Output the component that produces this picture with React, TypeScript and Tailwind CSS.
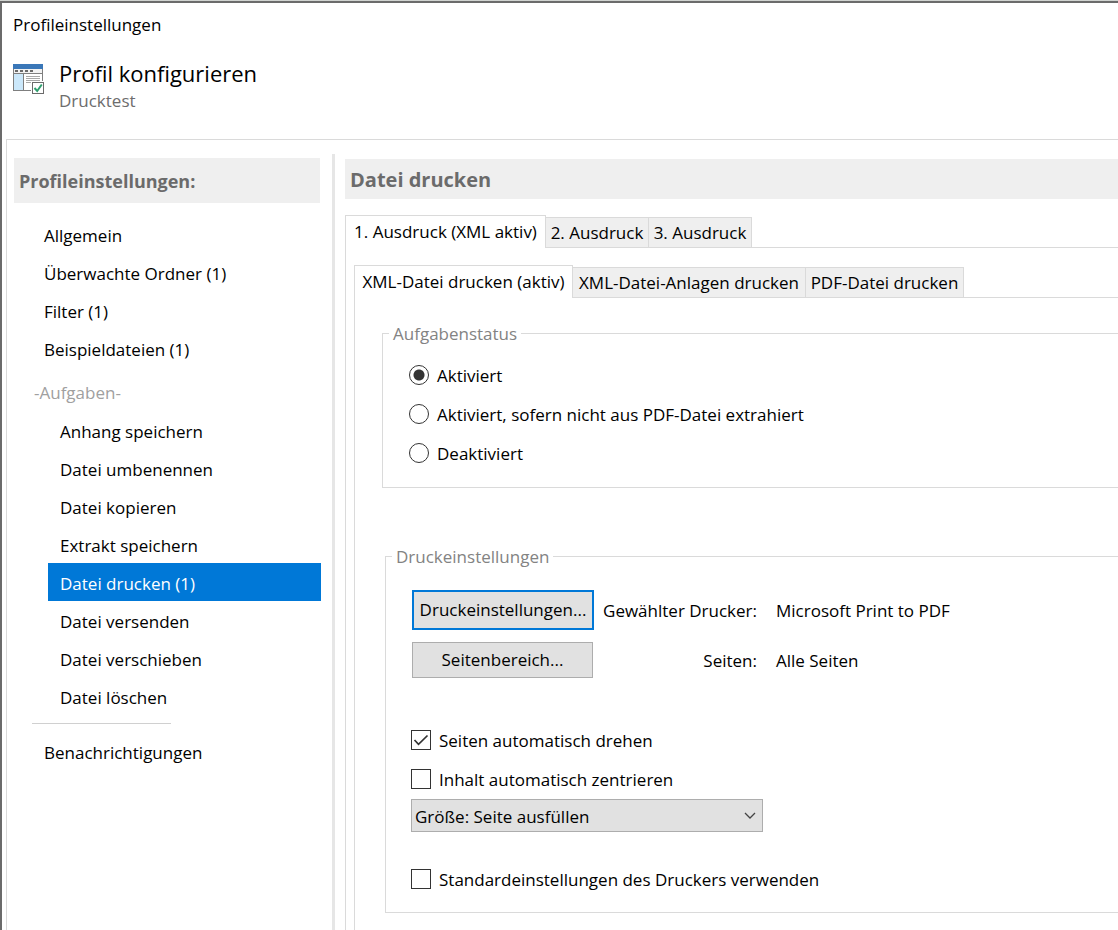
import { useState } from "react";
import type { ReactNode } from "react";

const mainEntries = ["Allgemein", "Überwachte Ordner (1)", "Filter (1)", "Beispieldateien (1)"];
const taskEntries = [
  "Anhang speichern",
  "Datei umbenennen",
  "Datei kopieren",
  "Extrakt speichern",
  "Datei drucken (1)",
  "Datei versenden",
  "Datei verschieben",
  "Datei löschen",
];

function ProfileIcon() {
  return (
    <svg width="32" height="32" viewBox="0 0 32 32" aria-hidden="true" shapeRendering="crispEdges" className="shrink-0">
      <rect x="0" y="0" width="30" height="27" fill="#7f7f7f" />
      <rect x="0" y="0" width="30" height="5" fill="#3a77b8" />
      <rect x="1" y="5" width="28" height="4" fill="#f2f2f2" />
      <path d="M2 6h3v2H2zM7 6h3v2H7zM12 6h3v2h-3zM17 6h3v2h-3z" fill="#6b6b6b" />
      <rect x="1" y="10" width="9" height="16" fill="#cbe8fb" />
      <rect x="11" y="10" width="18" height="16" fill="#fff" />
      <path d="M13 12h14v1H13zM13 14h14v1H13zM13 16h14v1H13zM13 18h5v1h-5z" fill="#a8a8a8" />
      <rect x="18" y="17" width="14" height="14" fill="#fff" />
      <rect x="19" y="18" width="12" height="12" fill="#6b6b6b" />
      <rect x="20" y="19" width="10" height="10" fill="#fff" />
      <path d="M21.5 24l2.7 3 4.6-6.5" fill="none" stroke="#2f9e6e" strokeWidth="2" shapeRendering="auto" />
    </svg>
  );
}

function TabStrip({ tabs, label }: { tabs: { text: string; width: string }[]; label: string }) {
  return (
    <div role="tablist" aria-label={label} className="flex h-[33px] items-end">
      {tabs.map((tab, i) =>
        i === 0 ? (
          <button
            key={tab.text}
            role="tab"
            aria-selected="true"
            className={`${tab.width} h-[33px] border border-b-0 border-[#dadada] bg-white pb-px text-center whitespace-nowrap`}
          >
            {tab.text}
          </button>
        ) : (
          <button
            key={tab.text}
            role="tab"
            aria-selected="false"
            className={`${tab.width} h-[31px] border border-l-0 border-[#dadada] bg-[#efefef] pt-px text-center whitespace-nowrap`}
          >
            {tab.text}
          </button>
        ),
      )}
      <div className="flex-1 border-b border-[#dadada]" />
    </div>
  );
}

function Group({ title, className, children }: { title: string; className: string; children: ReactNode }) {
  return (
    <fieldset className={`border border-r-0 border-[#dadada] ${className}`}>
      <legend className="ml-[6px] px-1 pt-[2px] leading-[22px] text-[#838383]">{title}</legend>
      <div className="px-[25px]">{children}</div>
    </fieldset>
  );
}

function Radio({ text, checked, onSelect }: { text: string; checked: boolean; onSelect: () => void }) {
  return (
    <label className="flex h-[39px] items-center gap-2">
      <input
        type="radio"
        name="status"
        checked={checked}
        onChange={onSelect}
        className="size-5 shrink-0 appearance-none rounded-full border border-[#333] bg-white checked:bg-[radial-gradient(circle,#333_0_5px,#fff_6px)]"
      />
      <span className="pt-[2px]">{text}</span>
    </label>
  );
}

function Check({ text, initial = false }: { text: string; initial?: boolean }) {
  return (
    <label className="flex h-[39px] items-center gap-2">
      <span className="relative size-5 shrink-0">
        <input
          type="checkbox"
          defaultChecked={initial}
          className="peer block size-5 appearance-none border border-[#333] bg-white"
        />
        <svg
          viewBox="0 0 20 20"
          aria-hidden="true"
          className="pointer-events-none absolute inset-0 hidden size-5 peer-checked:block"
        >
          <path d="M3.5 10l4 4.3 9-8.8" fill="none" stroke="#333" strokeWidth="1.7" />
        </svg>
      </span>
      <span className="pt-[2px]">{text}</span>
    </label>
  );
}

export default function App() {
  const [active, setActive] = useState("Datei drucken (1)");
  const [status, setStatus] = useState(0);
  const states = ["Aktiviert", "Aktiviert, sofern nicht aus PDF-Datei extrahiert", "Deaktiviert"];

  return (
    <div className="flex min-h-screen flex-col overflow-hidden border-t border-[#d0d3d0] bg-white font-['Open_Sans','Noto_Sans',sans-serif] text-[17px] leading-[22px] text-black">
      <div className="flex flex-1 flex-col border-t-2 border-l-2 border-[#6b6b6b]">
        <div className="px-[11px] pt-[11px]">Profileinstellungen</div>
        <header className="flex h-[103px] items-start gap-[14px] pt-[28px] pl-[11px]">
          <ProfileIcon />
          <div className="-mt-1">
            <h1 className="text-[22px] leading-[26px]">Profil konfigurieren</h1>
            <p className="mt-1 leading-[22px] text-[#6d6d6d]">Drucktest</p>
          </div>
        </header>

        <div className="ml-1 flex flex-1 border-t border-l border-[#dadada]">
          <nav className="w-[325px] shrink-0 pt-[18px] pl-[7px]">
            <h2 className="mr-[12px] flex h-[45px] items-center bg-[#efefef] pl-[5px] text-[18px] font-bold text-[#6b6b6b]">
              Profileinstellungen:
            </h2>
            <ul className="mt-[12px] mr-[11px]">
              {mainEntries.map((entry) => (
                <li key={entry}>
                  <a href="#" className="flex h-[38px] items-center pt-[3px] pl-[30px]">
                    {entry}
                  </a>
                </li>
              ))}
            </ul>
            <div className="flex h-[44px] items-center pt-[7px] pl-[20px] text-[#a0a0a0]">-Aufgaben-</div>
            <ul className="mr-[11px] ml-[34px]">
              {taskEntries.map((entry) => (
                <li key={entry}>
                  <a
                    href="#"
                    onClick={() => setActive(entry)}
                    className={`flex h-[38px] items-center pt-[3px] pl-[12px] ${entry === active ? "bg-[#0078d7] text-white" : ""}`}
                  >
                    {entry}
                  </a>
                </li>
              ))}
            </ul>
            <hr className="mt-[8px] ml-[18px] w-[139px] border-[#d0d0d0]" />
            <a href="#" className="mt-[8px] flex h-[38px] items-center pt-[3px] pl-[30px]">
              Benachrichtigungen
            </a>
          </nav>

          <div className="mt-[14px] w-[3px] shrink-0 bg-[#e6e6e6]" />

          <main className="flex min-w-0 flex-1 flex-col pt-[19px] pl-[10px]">
            <h2 className="flex h-[40px] items-center bg-[#efefef] pt-[2px] pl-[5px] text-[20px] font-bold text-[#6b6b6b]">
              Datei drucken
            </h2>
            <div className="mt-[16px] flex flex-1 flex-col">
              <TabStrip
                label="Ausdrucke"
                tabs={[
                  { text: "1. Ausdruck (XML aktiv)", width: "w-[201px]" },
                  { text: "2. Ausdruck", width: "w-[103px]" },
                  { text: "3. Ausdruck", width: "w-[103px]" },
                ]}
              />
              <div className="flex flex-1 flex-col border-l border-[#dadada] pt-[17px] pl-[8px]">
                <TabStrip
                  label="Dateien"
                  tabs={[
                    { text: "XML-Datei drucken (aktiv)", width: "w-[219px]" },
                    { text: "XML-Datei-Anlagen drucken", width: "w-[233px]" },
                    { text: "PDF-Datei drucken", width: "w-[158px]" },
                  ]}
                />
                <div className="flex-1 border-l border-[#dadada] pt-[23px] pl-[27px]">
                  <Group title="Aufgabenstatus" className="pb-[15px]">
                    <div className="pt-[10px] pl-px">
                      {states.map((text, i) => (
                        <Radio key={text} text={text} checked={status === i} onSelect={() => setStatus(i)} />
                      ))}
                    </div>
                  </Group>

                  <Group title="Druckeinstellungen" className="mt-[56px] ml-[3px] pb-[14px]">
                    <div className="grid grid-cols-[183px_163px_1fr] items-center pt-[22px]">
                      <button className="ml-px h-[40px] border-2 border-[#0078d7] bg-[#e1e1e1]">
                        Druckeinstellungen...
                      </button>
                      <span className="pt-[2px] text-right whitespace-nowrap">Gewählter Drucker:</span>
                      <span className="pt-[2px] pl-[19px] whitespace-nowrap">Microsoft Print to PDF</span>
                      <button className="mt-[12px] mr-px ml-px h-[36px] border border-[#adadad] bg-[#e1e1e1]">
                        Seitenbereich...
                      </button>
                      <span className="mt-[12px] pt-[2px] text-right">Seiten:</span>
                      <span className="mt-[12px] pt-[2px] pl-[19px]">Alle Seiten</span>
                    </div>
                    <div className="mt-[42px]">
                      <Check text="Seiten automatisch drehen" initial />
                      <Check text="Inhalt automatisch zentrieren" />
                    </div>
                    <div className="relative mt-px h-[33px] w-[352px]">
                      <select
                        aria-label="Größe"
                        className="block h-[33px] w-full appearance-none border border-[#adadad] bg-[#e1e1e1] pt-[2px] pl-[3px]"
                      >
                        <option>Größe: Seite ausfüllen</option>
                      </select>
                      <svg
                        viewBox="0 0 12 8"
                        aria-hidden="true"
                        className="pointer-events-none absolute top-[13px] right-[7px] h-2 w-3"
                      >
                        <path d="M1 1l5 5 5-5" fill="none" stroke="#444" strokeWidth="1.3" />
                      </svg>
                    </div>
                    <div className="mt-[27px]">
                      <Check text="Standardeinstellungen des Druckers verwenden" />
                    </div>
                  </Group>
                </div>
              </div>
            </div>
          </main>
        </div>
      </div>
    </div>
  );
}
